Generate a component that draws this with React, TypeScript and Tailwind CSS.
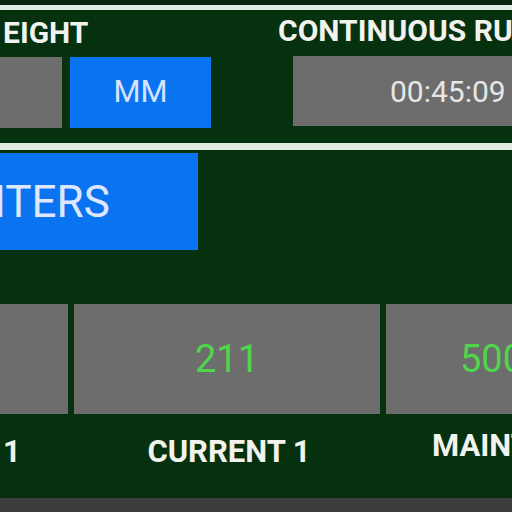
import React from "react";

const App = () => {
  return (
    <div
      className="w-[512px] h-[512px] overflow-hidden bg-[#05310f] flex flex-col"
      style={{ fontFamily: "Roboto, 'Liberation Sans', sans-serif" }}
    >
      {/* top edge + divider */}
      <div className="h-[5px] bg-[#0b2412] shrink-0" />
      <div className="h-[5px] bg-[#e4eae4] shrink-0" />

      {/* height / continuous run */}
      <div className="flex h-[133px] shrink-0">
        <div className="w-[211px] shrink-0 flex flex-col">
          <div className="mt-[8px] ml-[3px] text-[30px] leading-[30px] font-bold text-[#f2f2ee] whitespace-nowrap">
            EIGHT
          </div>
          <div className="mt-[9px] flex h-[71px]">
            <div className="w-[62px] shrink-0 bg-[#6d6d6d]" />
            <div className="ml-[8px] w-[141px] shrink-0 bg-[#0a74f0] flex items-center justify-center text-[31px] text-[#d9e2ff]">
              MM
            </div>
          </div>
        </div>
        <div className="ml-[67px] flex-1 min-w-0 flex flex-col">
          <div className="mt-[6px] text-[30px] leading-[30px] font-bold text-[#f2f2ee] whitespace-nowrap">
            CONTINUOUS RU
          </div>
          <div className="mt-[10px] ml-[15px] h-[70px] bg-[#6d6d6d] flex items-center pl-[97px] text-[30px] text-[#e6e6e6] whitespace-nowrap">
            00:45:09
          </div>
        </div>
      </div>
      <div className="h-[7px] bg-[#e4eae4] shrink-0" />

      {/* counters */}
      <div className="h-[152px] shrink-0">
        <div className="mt-[3px] w-[198px] h-[97px] bg-[#0a74f0] overflow-hidden flex items-center">
          <span className="ml-[-6px] text-[44px] leading-[44px] text-[#dfe6ff] whitespace-nowrap">
            ITERS
          </span>
        </div>
      </div>

      {/* values */}
      <div className="mt-[2px] flex h-[110px] shrink-0">
        <div className="w-[68px] shrink-0 bg-[#6d6d6d]" />
        <div className="ml-[6px] w-[306px] shrink-0 bg-[#6d6d6d] flex items-center justify-center text-[38px] text-[#4fd64c]">
          211
        </div>
        <div className="ml-[6px] flex-1 min-w-0 bg-[#6d6d6d] flex items-center pl-[74px] text-[38px] text-[#4fd64c] whitespace-nowrap">
          500
        </div>
      </div>

      {/* labels */}
      <div className="mt-[22px] flex text-[31px] leading-[31px] font-bold text-[#f2f2ee] whitespace-nowrap shrink-0">
        <div className="w-[74px] shrink-0 pl-[3px]">1</div>
        <div className="w-[310px] shrink-0 text-center">CURRENT 1</div>
        <div className="pl-[48px] mt-[-6px] min-w-0">MAINT</div>
      </div>

      <div className="flex-1" />
      <div className="h-[14px] bg-[#3b3e3d] shrink-0" />
    </div>
  );
};

export default App;
